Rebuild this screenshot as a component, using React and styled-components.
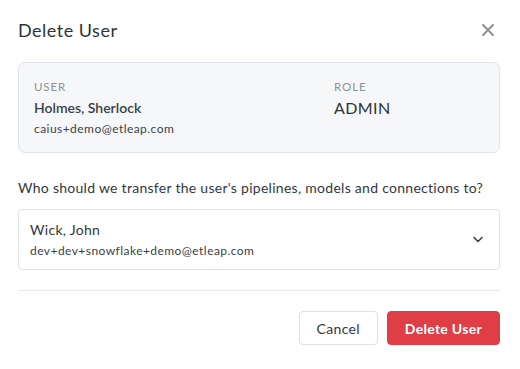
import React from "react";
import styled, { createGlobalStyle } from "styled-components";

const Global = createGlobalStyle`
  body {
    margin: 0;
    background: #ffffff;
    font-family: Lato, "Open Sans", "Liberation Sans", sans-serif;
    color: #333840;
  }
`;

const CloseIcon = () => (
  <svg width="12" height="12" viewBox="0 0 12 12">
    <path d="M1 1 L11 11 M11 1 L1 11" stroke="#919191" strokeWidth="2" strokeLinecap="round" />
  </svg>
);

const Chevron = () => (
  <svg width="10" height="7" viewBox="0 0 10 7">
    <path d="M1 1.5 L5 5.5 L9 1.5" fill="none" stroke="#3a3f47" strokeWidth="1.6" strokeLinecap="round" strokeLinejoin="round" />
  </svg>
);

export default function App() {
  return (
    <>
      <Global />
      <S.Modal>
        <S.Header>
          <S.Title>Delete User</S.Title>
          <S.Close aria-label="Close">
            <CloseIcon />
          </S.Close>
        </S.Header>

        <S.Card>
          <S.Col>
            <S.Label>User</S.Label>
            <S.Name>Holmes, Sherlock</S.Name>
            <S.Email>caius+demo@etleap.com</S.Email>
          </S.Col>
          <S.Col>
            <S.Label>Role</S.Label>
            <S.Role>ADMIN</S.Role>
          </S.Col>
        </S.Card>

        <S.Question>Who should we transfer the user's pipelines, models and connections to?</S.Question>

        <S.Select>
          <S.Col>
            <S.Option>Wick, John</S.Option>
            <S.Email>dev+dev+snowflake+demo@etleap.com</S.Email>
          </S.Col>
          <Chevron />
        </S.Select>

        <S.Divider />

        <S.Footer>
          <S.Button>Cancel</S.Button>
          <S.Button $danger>Delete User</S.Button>
        </S.Footer>
      </S.Modal>
    </>
  );
}

const S = {
  Modal: styled.div`
    width: 520px;
    box-sizing: border-box;
    padding: 18px 20px 0 18px;
  `,
  Header: styled.div`
    display: flex;
    align-items: center;
    justify-content: space-between;
    height: 24px;
  `,
  Title: styled.h1`
    margin: 0;
    font-size: 18px;
    font-weight: 400;
    letter-spacing: 0.5px;
    color: #2f3237;
  `,
  Close: styled.button`
    border: none;
    background: none;
    padding: 0;
    margin-right: 6px;
    display: flex;
    cursor: pointer;
  `,
  Card: styled.div`
    margin-top: 20px;
    display: grid;
    grid-template-columns: 2fr 1fr;
    padding: 16px 15px 16px 15px;
    height: 91px;
    box-sizing: border-box;
    background: #f6f7f9;
    border: 1px solid #e1e4e8;
    border-radius: 7px;
  `,
  Col: styled.div`
    display: flex;
    flex-direction: column;
  `,
  Label: styled.div`
    font-size: 11.5px;
    letter-spacing: 0.9px;
    text-transform: uppercase;
    color: #8b9199;
    line-height: 16px;
  `,
  Name: styled.div`
    margin-top: 4px;
    font-size: 14px;
    font-weight: 600;
    color: #3a3f47;
    line-height: 18px;
  `,
  Role: styled.div`
    margin-top: 3px;
    font-size: 16px;
    letter-spacing: 0.4px;
    color: #2f3237;
    line-height: 20px;
  `,
  Email: styled.div`
    margin-top: 4px;
    font-size: 12px;
    letter-spacing: 0.45px;
    color: #3a3f47;
    line-height: 16px;
  `,
  Question: styled.p`
    margin: 26px 0 0;
    font-size: 14px;
    letter-spacing: 0.28px;
    line-height: 18px;
    color: #33373d;
  `,
  Select: styled.div`
    margin-top: 12px;
    height: 61px;
    box-sizing: border-box;
    display: flex;
    align-items: center;
    justify-content: space-between;
    padding: 0 16px 0 11px;
    border: 1px solid #dfe2e6;
    border-radius: 4px;
  `,
  Option: styled.div`
    font-size: 14px;
    letter-spacing: 0.3px;
    color: #33373d;
    line-height: 18px;
  `,
  Divider: styled.hr`
    margin: 20px 0 0;
    border: none;
    border-top: 1px solid #e8e8ea;
  `,
  Footer: styled.div`
    margin-top: 20px;
    display: flex;
    justify-content: flex-end;
    gap: 9px;
  `,
  Button: styled.button`
    height: 34px;
    padding: 0 17px;
    font-family: inherit;
    font-size: 14px;
    letter-spacing: 0.3px;
    font-weight: ${(p) => (p.$danger ? 700 : 400)};
    border-radius: 4px;
    border: 1px solid ${(p) => (p.$danger ? "#e03e46" : "#dcdfe3")};
    background: ${(p) => (p.$danger ? "#e03e46" : "#ffffff")};
    color: ${(p) => (p.$danger ? "#ffffff" : "#33373d")};
    cursor: pointer;
  `,
};
